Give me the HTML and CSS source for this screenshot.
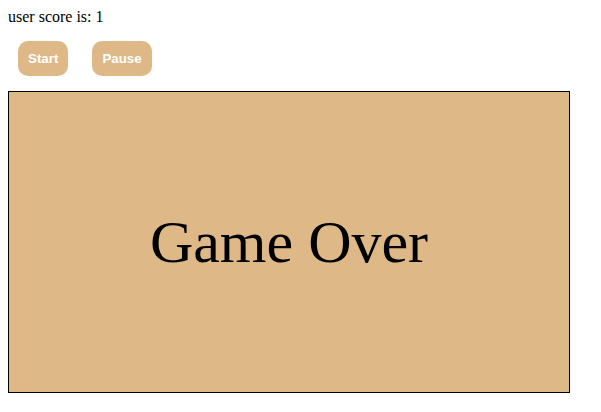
FILE: index.html
```html
<!DOCTYPE html>
<html>
<head>
<meta charset="utf-8">
<link rel="stylesheet" href="styles.css">
</head>
<body>
<div class="score">user score is: 1</div>
<div class="controls">
  <button class="btn">Start</button>
  <button class="btn">Pause</button>
</div>
<div class="board">
  <div class="over">Game Over</div>
</div>
</body>
</html>
```
FILE: styles.css
```css
html, body {
  margin: 0;
  padding: 0;
  background: #fff;
}
body {
  padding: 8px;
  font-family: "Liberation Serif", "Times New Roman", serif;
  font-size: 16px;
  color: #000;
}
.score {
  line-height: 18px;
  height: 18px;
}
.controls {
  display: flex;
  gap: 24px;
  padding: 15px 10px 15px 10px;
}
.btn {
  font-family: "Liberation Sans", Arial, sans-serif;
  font-size: 13.333px;
  font-weight: bold;
  line-height: 15px;
  color: #fff;
  background: #deb887;
  border: none;
  border-radius: 10px;
  padding: 10px;
  margin: 0;
}
.board {
  width: 560px;
  height: 300px;
  border: 1px solid #000;
  background: #deb887;
  display: flex;
  align-items: center;
  justify-content: center;
}
.over {
  font-family: "Liberation Serif", "Times New Roman", serif;
  font-size: 60px;
  line-height: 60px;
}
```
